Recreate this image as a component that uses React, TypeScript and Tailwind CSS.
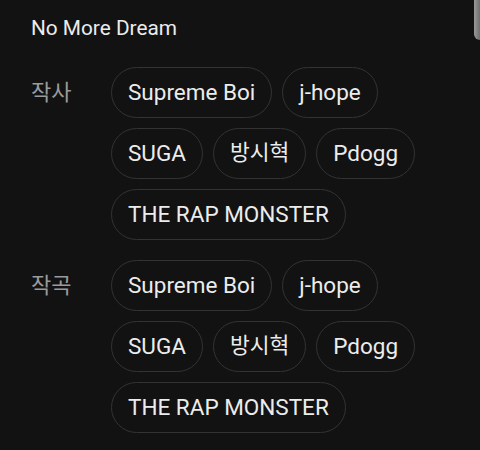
const lyricists = ["Supreme Boi", "j-hope", "SUGA", "방시혁", "Pdogg", "THE RAP MONSTER"];
const composers = ["Supreme Boi", "j-hope", "SUGA", "방시혁", "Pdogg", "THE RAP MONSTER"];

const isKorean = (s: string) => /[\uac00-\ud7a3]/.test(s);

function Chip({ name }: { name: string }) {
  return (
    <span
      className={
        "flex h-[51px] items-center rounded-full border border-[#333333] bg-[#121212] px-4 text-[#ececec] " +
        (isKorean(name) ? "text-[21.5px]" : "text-[22.5px]")
      }
    >
      {name}
    </span>
  );
}

function CreditRow({ label, names }: { label: string; names: string[] }) {
  return (
    <div className="flex">
      <div className="flex h-[51px] w-20 shrink-0 items-center text-[22px] text-[#9b9b9b]">
        {label}
      </div>
      <div className="flex flex-1 flex-wrap gap-[10px] pr-4">
        {names.map((n, i) => (
          <Chip key={i} name={n} />
        ))}
      </div>
    </div>
  );
}

export default function App() {
  return (
    <div
      className="relative h-[450px] w-[480px] overflow-hidden bg-[#121212] pl-[31px] pt-[14px]"
      style={{ fontFamily: 'Roboto, "Noto Sans CJK KR", sans-serif' }}
    >
      <div className="h-[28px] text-[20.8px] leading-[28px] text-[#ececec]">No More Dream</div>
      <div className="mt-[25px] flex flex-col gap-5">
        <CreditRow label="작사" names={lyricists} />
        <CreditRow label="작곡" names={composers} />
      </div>
      {/* scroll thumb */}
      <div className="absolute right-0 top-0 h-10 w-[6px] rounded-bl-md bg-gradient-to-r from-[#9a9a9a] to-[#6e6e6e]" />
    </div>
  );
}
